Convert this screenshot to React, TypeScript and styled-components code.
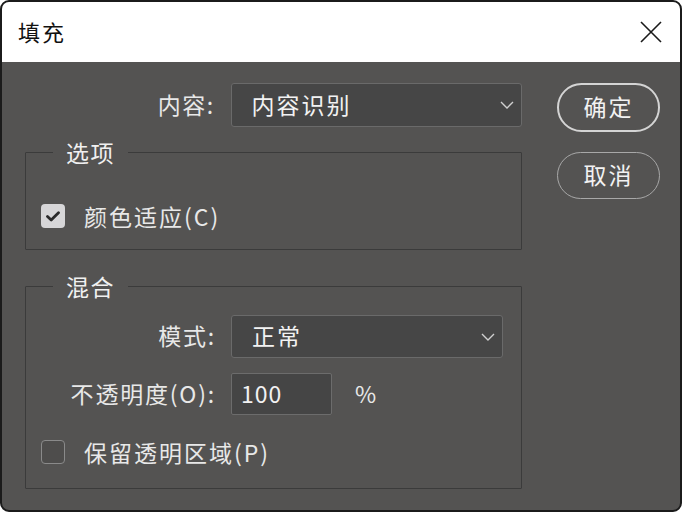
import * as React from "react";
import styled, { createGlobalStyle } from "styled-components";

const GlobalStyle = createGlobalStyle`
  html, body {
    margin: 0;
    padding: 0;
    background: #ffffff;
  }
  body {
    font-family: "Noto Sans CJK SC", "Noto Sans", sans-serif;
  }
`;

const Chevron = () => (
  <svg width="14" height="8" viewBox="0 0 14 8">
    <polyline points="1,1 7,7 13,1" fill="none" stroke="#d0d0d0" strokeWidth="1.4" />
  </svg>
);

const CloseIcon = () => (
  <svg width="22" height="22" viewBox="0 0 22 22">
    <path d="M1 1 L21 21 M21 1 L1 21" stroke="#1a1a1a" strokeWidth="1.6" />
  </svg>
);

const CheckMark = () => (
  <svg width="14" height="11" viewBox="0 0 14 11">
    <polyline points="1.5,5.5 5.2,9 12.5,1.8" fill="none" stroke="#2b2b2b" strokeWidth="2.8" strokeLinecap="round" strokeLinejoin="round" />
  </svg>
);

export default function App() {
  return (
    <>
      <GlobalStyle />
      <Window>
        <TitleBar>
          <Title>填充</Title>
          <CloseButton>
            <CloseIcon />
          </CloseButton>
        </TitleBar>
        <Body>
          <Main>
            <TopRow>
              <Label>内容:</Label>
              <Select width={292} height={44}>
                <span>内容识别</span>
                <Chevron />
              </Select>
            </TopRow>

            <Group gapTop={13} padTop={40} padBottom={21}>
              <Legend>选项</Legend>
              <CheckRow>
                <CheckBox checked>
                  <CheckMark />
                </CheckBox>
                <CheckLabel>颜色适应(C)</CheckLabel>
              </CheckRow>
            </Group>

            <Group gapTop={24} padTop={17} padBottom={24}>
              <Legend>混合</Legend>
              <FormRow>
                <GroupLabel>模式:</GroupLabel>
                <Select width={272} height={43}>
                  <span>正常</span>
                  <Chevron />
                </Select>
              </FormRow>
              <FormRow gapTop={15}>
                <GroupLabel>不透明度(O):</GroupLabel>
                <NumberBox>100</NumberBox>
                <Unit>%</Unit>
              </FormRow>
              <CheckRow gapTop={25}>
                <CheckBox />
                <CheckLabel>保留透明区域(P)</CheckLabel>
              </CheckRow>
            </Group>
          </Main>

          <Side>
            <Button primary>确定</Button>
            <Button>取消</Button>
          </Side>
        </Body>
      </Window>
    </>
  );
}

const Window = styled.div`
  box-sizing: border-box;
  width: 682px;
  height: 512px;
  border: 2px solid #1b1b1b;
  border-radius: 9px;
  overflow: hidden;
  display: flex;
  flex-direction: column;
  background: #545352;
`;

const TitleBar = styled.div`
  height: 60px;
  flex-shrink: 0;
  background: #ffffff;
  display: flex;
  align-items: center;
  justify-content: space-between;
  padding: 0 18px 0 16px;
`;

const Title = styled.div`
  font-size: 22px;
  color: #111111;
  letter-spacing: 2px;
  margin-top: -2px;
`;

const CloseButton = styled.div`
  display: flex;
  align-items: center;
  justify-content: center;
`;

const Body = styled.div`
  flex: 1;
  display: flex;
  padding: 21px 0 0 21px;
  color: #e8e8e8;
`;

const Main = styled.div`
  width: 499px;
  display: flex;
  flex-direction: column;
`;

const TopRow = styled.div`
  display: flex;
  align-items: center;
`;

const Label = styled.div`
  width: 192px;
  text-align: right;
  font-size: 23px;
  letter-spacing: 1.5px;
  margin-right: 16px;
  line-height: 24px;
  margin-top: -3px;
`;

const Select = styled.div<{ width: number; height: number }>`
  box-sizing: border-box;
  width: ${p => p.width}px;
  height: ${p => p.height}px;
  background: #464646;
  border: 1px solid #6a6a6a;
  border-radius: 3px;
  display: flex;
  align-items: center;
  justify-content: space-between;
  padding: 0 7px 0 20px;
  font-size: 23px;
  letter-spacing: 2px;
  color: #f2f2f2;

  span {
    margin-top: -3px;
  }
`;

const Group = styled.fieldset<{ gapTop: number; padTop: number; padBottom: number }>`
  margin: ${p => p.gapTop}px 0 0 2px;
  padding: ${p => p.padTop}px 0 ${p => p.padBottom}px 0;
  border: 1px solid #3b3b3b;
  border-radius: 1px;
  min-width: 0;
`;

const Legend = styled.legend`
  margin-left: 27px;
  padding: 0 13px;
  font-size: 23px;
  letter-spacing: 1.5px;
  color: #f0f0f0;
  line-height: 24px;
  height: 24px;
`;

const CheckRow = styled.div<{ gapTop?: number }>`
  display: flex;
  align-items: center;
  height: 24px;
  margin-top: ${p => p.gapTop ?? 0}px;
  padding-left: 15px;
`;

const CheckBox = styled.div<{ checked?: boolean }>`
  box-sizing: border-box;
  width: 24px;
  height: 24px;
  border-radius: 4px;
  display: flex;
  align-items: center;
  justify-content: center;
  background: ${p => (p.checked ? "#d7d6d8" : "#4e4d4c")};
  border: ${p => (p.checked ? "none" : "1.5px solid #8a8a8a")};
`;

const CheckLabel = styled.div`
  margin-left: 19px;
  font-size: 23px;
  line-height: 24px;
  letter-spacing: 2px;
`;

const FormRow = styled.div<{ gapTop?: number }>`
  display: flex;
  align-items: center;
  margin-top: ${p => p.gapTop ?? 0}px;
`;

const GroupLabel = styled.div`
  width: 190px;
  text-align: right;
  font-size: 23px;
  line-height: 24px;
  letter-spacing: 1.8px;
  margin-right: 15px;
  white-space: nowrap;
  margin-top: -3px;
`;

const NumberBox = styled.div`
  box-sizing: border-box;
  width: 101px;
  height: 42px;
  background: #454545;
  border: 1px solid #6c6c6c;
  border-radius: 2px;
  display: flex;
  align-items: center;
  padding: 0 0 3px 9px;
  font-size: 23px;
  letter-spacing: 1px;
  color: #f2f2f2;
`;

const Unit = styled.div`
  margin-left: 23px;
  font-size: 23px;
  margin-top: -3px;
`;

const Side = styled.div`
  display: flex;
  flex-direction: column;
  gap: 20px;
  margin-left: 35px;
`;

const Button = styled.div<{ primary?: boolean }>`
  box-sizing: border-box;
  width: 103px;
  height: ${p => (p.primary ? 49 : 47)}px;
  border-radius: 25px;
  border: ${p => (p.primary ? "2px solid #d4d4d4" : "1px solid #a8a8a8")};
  display: flex;
  align-items: center;
  justify-content: center;
  padding-bottom: 3px;
  font-size: 23px;
  letter-spacing: 2px;
  color: #f2f2f2;
`;
